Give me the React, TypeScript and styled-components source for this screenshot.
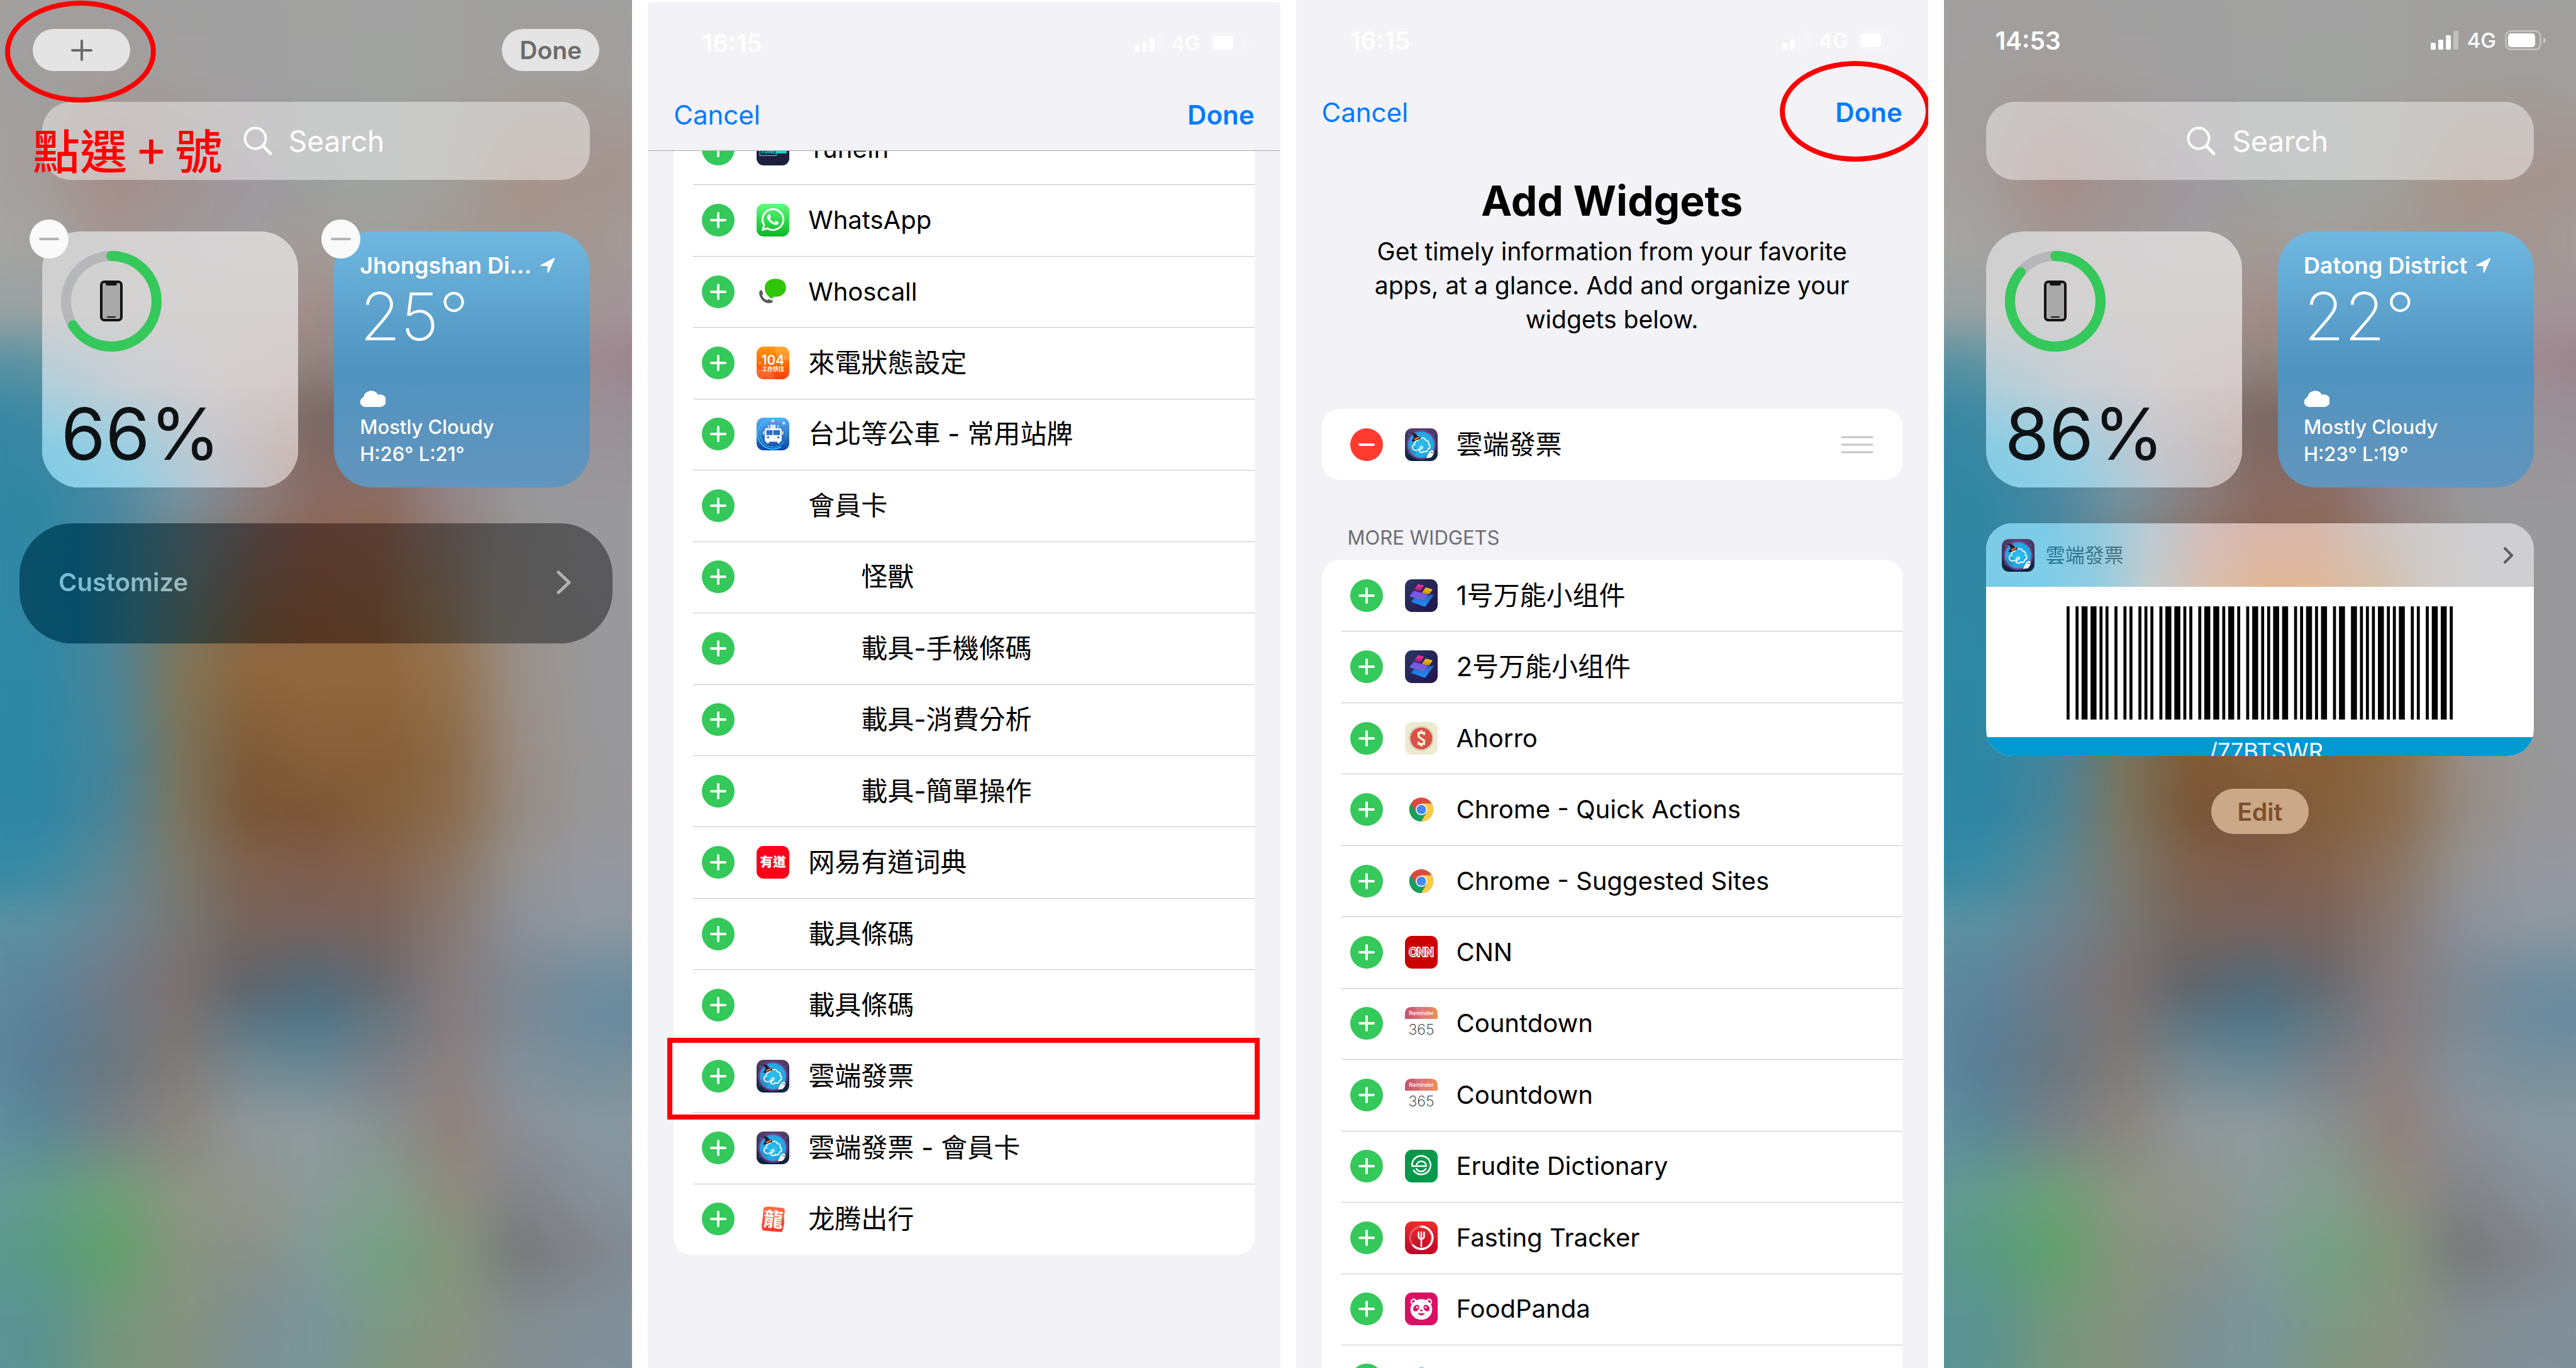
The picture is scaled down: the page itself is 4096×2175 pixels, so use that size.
import React from 'react';
import styled, { createGlobalStyle } from 'styled-components';
import { FaWhatsapp } from 'react-icons/fa';

const fontStack = `Inter, "Noto Sans CJK TC", "Noto Sans CJK SC", sans-serif`;

const GlobalStyle = createGlobalStyle`
  *, *::before, *::after { box-sizing: border-box; }
  body { margin: 0; background: #fff; font-family: ${fontStack}; color: #000; }
  button, input { font: inherit; color: inherit; border: 0; padding: 0; margin: 0; background: none; outline: none; }
  button { cursor: pointer; }
  h1, h2, p, ul { margin: 0; padding: 0; font-weight: inherit; }
  ul { list-style: none; }
  svg { display: block; flex: none; }
`;

const Board = styled.main`
  display: grid;
  grid-template-columns: repeat(4, minmax(0, 1fr));
  gap: 25px;
  min-height: 100vh;
`;

/* ---------- colour meshes ---------- */

type MeshRow = [number, string];

const MeshLayer = styled.div`
  position: absolute;
  inset: 0;
`;

const MeshBox = styled.div<{ $bleed: number; $blur: number }>`
  position: absolute;
  inset: ${(p) => -p.$bleed}px;
  filter: ${(p) => (p.$blur ? `blur(${p.$blur}px)` : 'none')};
  pointer-events: none;
`;

function Mesh({ rows, bleed = 0, blur = 0 }: { rows: MeshRow[]; bleed?: number; blur?: number }) {
  return (
    <MeshBox $bleed={bleed} $blur={blur} aria-hidden="true">
      {rows.map(([y, colours], i) => {
        const stops = colours.split(' ').map((c) => `#${c}`).join(', ');
        const prev = i ? rows[i - 1][0] : 0;
        const mask = i ? `linear-gradient(to bottom, transparent ${prev}%, #000 ${y}%)` : undefined;
        return (
          <MeshLayer
            key={y}
            style={{ background: `linear-gradient(to right, ${stops})`, maskImage: mask, WebkitMaskImage: mask }}
          />
        );
      })}
    </MeshBox>
  );
}

const wallpaper: MeshRow[] = [
  [0, 'a1a1a1 a1a09f a09f9f a0a0a0 a1a1a0 a1a1a0 a1a1a0 a1a1a0 a0a09f a0a0a0 a1a1a0'],
  [7, 'a1a09f a19f9e a39d9b a19f9e a1a0a1 a1a1a1 a0a2a0 a1a1a0 a19f9c a19e9c a1a09f'],
  [14, 'a5a4a3 a39c9a a58c88 a09494 9f999f 9ba09f 9fa4a1 a19f9b a7948a a69590 a39590'],
  [19, 'a5a6a2 a5a3a1 a39694 a09898 9f9c9e a39c98 a29e9b a29a96 a49690 a49893 a39e9c'],
  [24, '97a1a3 98a1a2 9a9c9b 9c9a99 9f9490 a08c88 a08c8a a29190 a39494 a29598 a2939b'],
  [27, '5a93a2 6295a2 8097a0 939a9d 958e8b 948580 958380 998a8a 9c9094 9d8a90 9d8188'],
  [31, '3687a3 3e88a3 5a8da0 7f949d 857a78 7a6863 7e6862 8e7c79 98908f 999298 998e98'],
  [37, '3186a3 3187a2 4a88a2 76929f 8b7f80 8b6b64 8c6c63 94868a 97989a 99989c 99989b'],
  [43, '2f88a4 2f87a4 4c8599 6e776e 87664f 8a6040 8c633f 907660 979089 999999 99979b'],
  [49, '2f8aa4 2f88a5 4b8497 807558 8f683f 93693f 92693f 95734f 9a918b 98989a 97959b'],
  [55, '2d87a3 2e88a5 45849a 79745c 7f5a38 87603a 875e37 8b6b49 9a8d86 989898 98969a'],
  [59, '3087a4 2f86a5 4a8396 7c7560 7a5637 7d5537 83603c 8b6c4e 958c85 979798 98959a'],
  [63, '3388a5 3a8aa3 5d8895 7b786c 7e614f 7e5c4d 84634f 8a7565 949391 9697a0 9598a0'],
  [67, '5b909f 5c90a0 6d8593 787774 76645d 75625d 79655f 877a75 8c909a 8f98a0 8c979f'],
  [71, '5f8b9d 5f859c 717a87 7d706f 5f6469 556976 696a6e 877c7e 7d8992 708d9e 6d8d9f'],
  [74, '6088a0 5a7f97 6b7983 7c7472 5d7683 50778a 697880 877c7e 7c8993 6c8b9f 688a9f'],
  [77, '6089a0 5a7d93 6a777f 837b77 738891 6a8894 7a7f86 8b8080 82919b 78909b 7a909b'],
  [81, '6290a2 5b8796 788087 8a857f 8f9799 8e9a9e 88908f 90817c 8c9097 8797a0 8897a0'],
  [86, '63979a 639b8a 6ea078 8c9683 92948e 8b9b98 829d8e 8f8c7e 828388 878f97 8594a0'],
  [90, '5e9893 599a82 61a06c 87957f 8b908a 809a94 74a083 84967c 77797b 818489 828f9a'],
  [95, '5c9399 5a938f 74987c 85937f 7f9091 7b959b 7d9a86 89947f 848d90 828f98 80909c'],
  [100, '5c909c 5b938d 7a957c 84917f 7c9296 7a969a 82967f 8c9283 848d92 81909b 7f909b'],
];

const frostedTile: MeshRow[] = [
  [0, 'cfcfcf d4d2d2 d8d3d4 d8d5d5'],
  [33, 'd0d0d0 d3d1d1 d5d1d1 d6d0d0'],
  [60, 'afcfda c8ced3 d2cdce d4c9c8'],
  [85, '86cce3 9acee2 c5c7cd cbbab6'],
  [100, '7fcce6 92cee3 bdc7d0 c7b5af'],
];

const frostedHeader: MeshRow[] = [
  [0, '7ccce8 7ccce8 93cbe0 bccbd4 d2bdbc d8b6ac d8b7ac cfc3c0 cdcccc cfced0 cfcfd1'],
  [100, '7ccbe6 7dcde9 90cce1 c3cbcc d9bfae dfb799 dfb799 d6bea7 d0c9c4 cfcfd1 cfcfd1'],
];

const darkPanel: MeshRow[] = [
  [0, '0a5069 084d67 224f5e 3c4a50 4f4040 5a3b33 5a3e34 574a47 575555 59595a 5b5b5d'],
  [100, '0a5069 084d67 224f5a 3c463f 4f3a27 573823 573a25 5a4833 5b5650 59595a 59595b'],
];

/* ---------- screens ---------- */

const Screen = styled.section<{ $light?: boolean; $dropped?: boolean }>`
  position: relative;
  display: flex;
  flex-direction: column;
  overflow: hidden;
  min-width: 0;
  margin-top: ${(p) => (p.$dropped ? 4 : 0)}px;
  background: ${(p) => (p.$light ? '#f2f2f7' : '#a1a1a1')};
`;

const TodayColumn = styled.div`
  position: relative;
  display: flex;
  flex-direction: column;
  padding: 0 67px;
`;

const StatusRow = styled.div`
  display: flex;
  align-items: center;
  height: 128px;
  padding: 0 48px 0 74px;
  color: #fff;
`;

const Clock = styled.time`
  width: 120px;
  margin-right: auto;
  text-align: center;
  font-size: 39px;
  font-weight: 600;
`;

const StatusIcons = styled.div`
  display: flex;
  align-items: center;
  gap: 14px;
  font-size: 33px;
  font-weight: 500;
`;

function StatusBar({ time, bars, charge, faint }: { time: string; bars: number; charge: number; faint: number }) {
  return (
    <StatusRow>
      <Clock>{time}</Clock>
      <StatusIcons>
        <svg width="44" height="30" viewBox="0 0 44 30" fill="#fff" aria-hidden="true">
          {[11, 16, 23, 30].map((h, i) => (
            <rect key={h} x={i * 12} y={30 - h} width="8" height={h} rx="2" opacity={i < bars ? 1 : faint} />
          ))}
        </svg>
        <span>4G</span>
        <svg width="65" height="32" viewBox="0 0 65 32" fill="none" aria-hidden="true">
          <rect x="1.5" y="1.5" width="55" height="29" rx="8" stroke="#fff" strokeWidth="3" opacity={faint} />
          <rect x="5" y="5" width={charge} height="22" rx="5" fill="#fff" />
          <path d="M61 11c3 1 4 3 4 5s-1 4-4 5z" fill="#fff" opacity={faint} />
        </svg>
      </StatusIcons>
    </StatusRow>
  );
}

/* ---------- today view ---------- */

const TopActions = styled.div`
  position: relative;
  display: flex;
  justify-content: space-between;
  padding: 46px 52px 49px;
`;

const Pill = styled.button<{ $warm?: boolean }>`
  display: flex;
  align-items: center;
  justify-content: center;
  width: 155px;
  height: ${(p) => (p.$warm ? 72 : 67)}px;
  border-radius: 36px;
  background: ${(p) => (p.$warm ? '#cba888' : '#e4e4e4')};
  color: ${(p) => (p.$warm ? '#7f4f2a' : '#6b6b6b')};
  font-size: 39px;
  font-weight: 600;
`;

const PhoneStatus = styled.div`
  position: relative;
  padding-bottom: 34px;
`;

const SearchBox = styled.label`
  display: flex;
  align-items: center;
  justify-content: center;
  gap: 26px;
  height: 124px;
  border-radius: 46px;
  background: rgba(255, 255, 255, 0.43);
  color: #fff;
`;

const SearchInput = styled.input`
  width: 160px;
  font-size: 46px;
  line-height: 60px;
  &::placeholder { color: #fff; opacity: 1; }
`;

function Search() {
  return (
    <SearchBox>
      <svg width="46" height="46" viewBox="0 0 46 46" fill="none" stroke="#fff" strokeWidth="4" strokeLinecap="round" aria-hidden="true">
        <circle cx="19" cy="19" r="16.5" />
        <path d="M31 31l12 12" strokeWidth="5" />
      </svg>
      <SearchInput type="text" placeholder="Search" aria-label="Search" />
    </SearchBox>
  );
}

const WidgetGrid = styled.div`
  display: grid;
  grid-template-columns: 1fr 1fr;
  gap: 57px;
  margin-top: 82px;
`;

const Widget = styled.article`
  position: relative;
  aspect-ratio: 1;
`;

const TileClip = styled.div`
  position: absolute;
  inset: 0;
  overflow: hidden;
  border-radius: 60px;
`;

const BatteryBody = styled.div`
  position: relative;
  display: flex;
  flex-direction: column;
  justify-content: space-between;
  height: 100%;
  padding: 31px 31px 17px 30px;
`;

const Percent = styled.p`
  color: #0e1214;
  font-size: 114px;
  line-height: 136px;
`;

const RemoveBadge = styled.button`
  position: absolute;
  left: -20px;
  top: -19px;
  display: grid;
  place-items: center;
  width: 62px;
  height: 62px;
  border-radius: 50%;
  background: #fafafa;
`;

function Remove({ label }: { label: string }) {
  return (
    <RemoveBadge aria-label={label}>
      <svg width="32" height="4" viewBox="0 0 32 4" aria-hidden="true">
        <rect width="32" height="4" rx="2" fill="#b4b4b4" />
      </svg>
    </RemoveBadge>
  );
}

function BatteryWidget({ level, removable }: { level: number; removable?: boolean }) {
  const r = 72;
  const length = 2 * Math.PI * r;
  return (
    <Widget>
      <TileClip>
        <Mesh rows={frostedTile} />
      </TileClip>
      <BatteryBody>
        <svg width="160" height="160" viewBox="0 0 160 160" fill="none" aria-hidden="true">
          <circle cx="80" cy="80" r={r} stroke="#8e9299" strokeOpacity="0.4" strokeWidth="16" />
          <circle
            cx="80" cy="80" r={r} stroke="#35c85a" strokeWidth="16" strokeLinecap="round"
            strokeDasharray={`${(length * level) / 100} ${length}`} transform="rotate(-90 80 80)"
          />
          <rect x="64" y="49" width="32" height="61" rx="5" fill="#a9a9a9" stroke="#131313" strokeWidth="4" />
          <path d="M71 49h18v3q0 3-3 3H74q-3 0-3-3z" fill="#131313" />
          <path d="M74 105h12" stroke="#131313" strokeWidth="2" strokeLinecap="round" />
        </svg>
        <Percent>{level}%</Percent>
      </BatteryBody>
      {removable && <Remove label="Remove Batteries" />}
    </Widget>
  );
}

const WeatherBody = styled.div`
  display: flex;
  flex-direction: column;
  height: 100%;
  padding: 32px 29px 32px 41px;
  border-radius: 60px;
  background: linear-gradient(#6fb8e0, #4f93c0 54%, #6395bd);
  color: #fff;
`;

const Place = styled.h2`
  display: flex;
  align-items: center;
  gap: 14px;
  font-size: 36px;
  font-weight: 600;
  line-height: 44px;
  white-space: nowrap;
`;

const Temperature = styled.p`
  font-size: 105px;
  font-weight: 200;
  line-height: 118px;
`;

const Conditions = styled.div`
  margin-top: auto;
  font-size: 31px;
  font-weight: 500;
  line-height: 43px;
  white-space: nowrap;
`;

const CloudIcon = styled.svg`
  margin-bottom: 10px;
`;

function WeatherWidget({ place, temp, range, removable }: { place: string; temp: string; range: string; removable?: boolean }) {
  return (
    <Widget>
      <WeatherBody>
        <Place>
          {place}
          <svg width="24" height="24" viewBox="0 0 24 24" fill="#fff" aria-hidden="true">
            <path d="M23 1.5 13.5 23q-1.4 1.6-2-.5V13H1.500q-2-.8-.4-2L21.500.5q2-.6 1.500 1z" />
          </svg>
        </Place>
        <Temperature>{temp}</Temperature>
        <Conditions>
          <CloudIcon width="41" height="26" viewBox="0 0 41 26" fill="#fff" aria-hidden="true">
            <path d="M8 26a8 8 0 0 1-2-15.500A12.500 12.500 0 0 1 29 6.500 10 10 0 1 1 32 26z" />
          </CloudIcon>
          <p>Mostly Cloudy</p>
          <p>{range}</p>
        </Conditions>
      </WeatherBody>
      {removable && <Remove label="Remove Weather" />}
    </Widget>
  );
}

const CustomizePanel = styled.button`
  position: relative;
  display: flex;
  align-items: center;
  justify-content: space-between;
  overflow: hidden;
  height: 191px;
  margin: 57px -36px 0;
  padding: 0 66px 4px 62px;
  border-radius: 84px;
  font-size: 40px;
  font-weight: 600;
`;

const CustomizeLabel = styled.span`
  position: relative;
  background: linear-gradient(to right, #74bfd9, #9fb9bd);
  background-clip: text;
  color: transparent;
`;

const Chevron = styled.svg`
  position: relative;
`;

const InvoiceCard = styled.article`
  overflow: hidden;
  margin-top: 57px;
  border-radius: 42px;
  background: #fff;
`;

const InvoiceHeader = styled.header`
  position: relative;
  display: flex;
  align-items: center;
  gap: 18px;
  height: 101px;
  padding: 0 32px 0 25px;
`;

const InvoiceTitle = styled.h2`
  position: relative;
  margin-right: auto;
  background: linear-gradient(to right, #1d7192, #4d6f7e);
  background-clip: text;
  color: transparent;
  font-size: 31px;
  line-height: 40px;
`;

const BarcodeArea = styled.div`
  display: flex;
  justify-content: center;
  padding: 31px 0 28px;
`;

const CarrierCode = styled.p`
  overflow: hidden;
  height: 30px;
  padding-left: 20px;
  background: #0099d0;
  color: #fff;
  font-size: 36px;
  line-height: 44px;
  text-align: center;
`;

const EditRow = styled.div`
  display: flex;
  justify-content: center;
  margin-top: 52px;
`;

const code39: Record<string, string> = {
  '*': 'nwnnwnwnn',
  '/': 'nwnwnnnwn',
  '7': 'nnnwnnwnw',
  B: 'nnwnnwnnw',
  T: 'nnnnwnwwn',
  S: 'nnwnnnwwn',
  W: 'wwwnnnnnn',
  R: 'wnnnnnwwn',
};

function Barcode({ value }: { value: string }) {
  const bars: { x: number; w: number }[] = [];
  let x = 0;
  for (const ch of `*${value}*`) {
    [...code39[ch]].forEach((kind, i) => {
      const w = kind === 'w' ? 2 : 1;
      if (i % 2 === 0) bars.push({ x, w });
      x += w;
    });
    x += 1;
  }
  return (
    <svg width="614" height="180" viewBox={`0 0 ${x - 1} 10`} preserveAspectRatio="none" role="img" aria-label={value}>
      {bars.map((b) => (
        <rect key={b.x} x={b.x} y="0" width={b.w} height="10" />
      ))}
    </svg>
  );
}

/* ---------- app icons ---------- */

const Tile = ({ children, fill }: { children?: React.ReactNode; fill: string }) => (
  <svg width="52" height="52" viewBox="0 0 60 60" aria-hidden="true">
    <rect width="60" height="60" rx="13" fill={fill} />
    {children}
  </svg>
);

const SharedDefs = () => (
  <svg width="0" height="0" style={{ position: 'absolute' }} aria-hidden="true">
    <defs>
      <linearGradient id="waBg" x2="0" y2="1"><stop stopColor="#62fb7c" /><stop offset="1" stopColor="#06b824" /></linearGradient>
      <linearGradient id="jobBg" x2="0" y2="1"><stop stopColor="#ff9800" /><stop offset="1" stopColor="#ff3d0a" /></linearGradient>
      <linearGradient id="busBg" x2="0" y2="1"><stop stopColor="#5aabf8" /><stop offset="1" stopColor="#0c46a3" /></linearGradient>
      <linearGradient id="nightBg" x2="0" y2="1"><stop stopColor="#553e6c" /><stop offset="1" stopColor="#08213a" /></linearGradient>
      <radialGradient id="moon"><stop stopColor="#2cc0f0" /><stop offset=".8" stopColor="#22a4df" /><stop offset=".86" stopColor="#7d3f93" /><stop offset="1" stopColor="#7d3f93" stopOpacity="0" /></radialGradient>
      <linearGradient id="widgetBg" x2="1" y2="1"><stop stopColor="#2a3763" /><stop offset="1" stopColor="#23134d" /></linearGradient>
      <linearGradient id="pinkSlab" x2="0" y2="1"><stop stopColor="#ff2f9f" /><stop offset="1" stopColor="#8d2070" /></linearGradient>
      <linearGradient id="goldSlab" x2="0" y2="1"><stop stopColor="#ffc400" /><stop offset="1" stopColor="#b98525" /></linearGradient>
      <linearGradient id="violetSlab" x2="0" y2="1"><stop stopColor="#7a4dff" /><stop offset="1" stopColor="#7167bd" /></linearGradient>
      <linearGradient id="blueSlab" x2="0" y2="1"><stop stopColor="#2463bd" /><stop offset="1" stopColor="#2090ff" /></linearGradient>
      <linearGradient id="remBg" x2="1" y2="0"><stop stopColor="#bf5272" /><stop offset=".6" stopColor="#e3736c" /><stop offset="1" stopColor="#e79356" /></linearGradient>
      <linearGradient id="fastBg" x2="0" y2="1"><stop stopColor="#ee2d2c" /><stop offset="1" stopColor="#bd0427" /></linearGradient>
      <linearGradient id="sealBg" x2="0" y2="1"><stop stopColor="#ff6d43" /><stop offset="1" stopColor="#f8372c" /></linearGradient>
    </defs>
  </svg>
);

const icons: Record<string, React.ReactNode> = {
  blank: <svg width="52" height="52" aria-hidden="true" />,
  tunein: (
    <Tile fill="#1c203c">
      <rect x="32" y="20" width="23" height="18" fill="#14d8cc" />
      <rect x="6" y="23" width="30" height="19" fill="#1c203c" stroke="#14d8cc" strokeWidth="1.500" />
      <text x="21" y="38" textAnchor="middle" fontSize="10" fontWeight="800" fill="#14d8cc">TUNE</text>
    </Tile>
  ),
  whatsapp: (
    <Tile fill="url(#waBg)">
      <g transform="translate(6 5)">
        <FaWhatsapp size={48} color="#fff" />
      </g>
    </Tile>
  ),
  whoscall: (
    <svg width="52" height="52" viewBox="0 0 60 60" aria-hidden="true">
      <path d="M34 6h1c13 0 19 7 19 16 0 10-7 17-18 17-4 0-6 0-7 3l-1 1q-4-2-6-5c-4-4-7-9-7-15C15 12 23 6 34 6z" fill="#31c50a" />
      <path d="M5 30q2-5 5-2l2 5q0 2-2 3 3 8 10 9 1-2 4-1l5 2q2 2-1 4-10 3-18-5Q4 37 5 30z" fill="#5b5b5b" />
    </svg>
  ),
  job: (
    <Tile fill="url(#jobBg)">
      <path d="M33 0h14q13 0 13 13v13q-27 2-27-26z" fill="#fff" opacity=".18" />
      <path d="M0 42q33-8 33 18H13Q0 60 0 47z" fill="#fff" opacity=".14" />
      <text x="30" y="34" textAnchor="middle" fontSize="24" fontWeight="600" fill="#fff">104</text>
      <text x="30" y="45" textAnchor="middle" fontSize="10" fontWeight="700" fill="#fff">工作快找</text>
      <path d="M6 27v6M3 30h6M52 17v6M49 20h6" stroke="#ffc08a" strokeWidth="1" />
    </Tile>
  ),
  bus: (
    <Tile fill="url(#busBg)">
      <g fill="none" stroke="#35c4ff" strokeLinecap="round">
        <path d="M50 10A28 28 0 1 0 44 54" strokeWidth="2" />
        <path d="M30 6A24 24 0 1 0 50 44" strokeWidth="1.500" opacity=".8" />
        <path d="M46 12A24 24 0 0 1 54 36" strokeWidth="1" opacity=".5" />
      </g>
      <circle cx="50" cy="10" r="2.500" fill="#c9f6ff" /><circle cx="30" cy="6" r="2.500" fill="#c9f6ff" />
      <rect x="25" y="13" width="10" height="8" rx="1" fill="#dcecff" />
      <rect x="15" y="20" width="31" height="24" rx="3" fill="#fff" />
      <rect x="18" y="23" width="25" height="9" fill="#2c6fc6" />
      <path d="M30 23v9" stroke="#fff" strokeWidth="1.500" />
      <path d="M13 25v6M48 25v6" stroke="#fff" strokeWidth="2" />
      <circle cx="21" cy="36" r="2" fill="#2c6fc6" /><circle cx="40" cy="36" r="2" fill="#2c6fc6" />
      <rect x="18" y="42" width="5" height="5" rx="1" fill="#fff" /><rect x="38" y="42" width="5" height="5" rx="1" fill="#fff" />
      <path d="M18 19l3 2M21 14l2 5M43 19l-3 2M40 14l-2 5" stroke="#fff" strokeWidth="1.500" />
    </Tile>
  ),
  youdao: (
    <Tile fill="#ff001b">
      <text x="30" y="38" textAnchor="middle" fontSize="24" fontWeight="900" fill="#fff">有道</text>
    </Tile>
  ),
  invoice: (
    <Tile fill="url(#nightBg)">
      <circle cx="30" cy="30" r="29" fill="url(#moon)" />
      <path d="M8 38q5-6 12-2v14q-9-4-12-12z" fill="#2489b8" opacity=".6" />
      <g fill="none" stroke="#fff" strokeWidth="2" strokeLinecap="round">
        <path d="M22 40c-5 1-9-2-8-6 0-3 2-4 4-4-1-5 2-8 6-8 2-5 12-6 14 0 4 0 7 4 5 7 4 2 4 8-1 9 0 4-4 6-8 4" />
        <path d="M24 39c4 1 9-2 8-5-2-2-6 1-6 6 0 5 5 5 8 3" />
      </g>
      <path d="M11 9c6-1 10 1 12 5l5 2q2 1 0 3l-12 5q-3 1-4-1l4-5q0-6-5-9z" fill="#2b1533" />
      <path d="M17 19l9-4 1 2-9 5z" fill="#f08a1d" />
      <path d="M44 44q3-5 8-3 2 4-1 9-3 5-8 4l-4 1 2-5q2-3 3-6z" fill="#fff" />
      <circle cx="48" cy="44" r="1" fill="#223" /><circle cx="51" cy="45" r="1" fill="#223" />
      <circle cx="7" cy="12" r="1" fill="#2aa8c8" /><circle cx="53" cy="11" r="1" fill="#2aa8c8" /><circle cx="6" cy="46" r="1" fill="#2aa8c8" />
    </Tile>
  ),
  seal: (
    <svg width="52" height="52" viewBox="0 0 60 60" aria-hidden="true">
      <path d="M13 9q9-3 18-1l19 2 2 6-2 8 1 14-3 12-1 4-17-1-19-2-2-8 2-13z" fill="url(#sealBg)" />
      <text x="31" y="44" textAnchor="middle" fontSize="36" fontWeight="700" fill="#fff" transform="rotate(5 30 30)">龍</text>
    </svg>
  ),
  slabs: (
    <Tile fill="url(#widgetBg)">
      <path d="M17 34l34-6q2 0 1 2L38 49q-1 1-3 1L13 42q-2-1-1-2z" fill="url(#blueSlab)" />
      <path d="M16 21l24 6q2 0 1 2l-5 8q-1 1-3 1L10 32q-2-1-1-2z" fill="url(#violetSlab)" />
      <path d="M24 9l10 2q1 1 0 2l-5 8q-1 1-2 1l-9-3q-1-1 0-2z" fill="url(#pinkSlab)" />
      <path d="M38 15l11 3q2 1 1 2l-5 7-2 1-11-3q-1-1 0-2z" fill="url(#goldSlab)" />
    </Tile>
  ),
  ahorro: (
    <Tile fill="#eeead2">
      <circle cx="30" cy="30" r="23" fill="#d4cfb6" />
      <circle cx="30" cy="30" r="20" fill="#db4f45" />
      <path d="M35 24v-4H25v7l10 7v6H25v-4M30 15v5M30 40v5" fill="none" stroke="#f4efd8" strokeWidth="4" />
    </Tile>
  ),
  chrome: (
    <svg width="52" height="52" viewBox="0 0 60 60" aria-hidden="true">
      <circle cx="30" cy="30" r="22" fill="#db4a3e" />
      <path d="M10.900 19L20.500 35.500 30 41l9.500-5.500L30 52A22 22 0 0 1 10.900 19z" fill="#14a05d" />
      <path d="M49.100 19H30l9.500 16.500L30 52A22 22 0 0 0 49.100 19z" fill="#fdcc44" />
      <circle cx="30" cy="30" r="10.500" fill="#f3f3f3" />
      <circle cx="30" cy="30" r="8.500" fill="#4688f4" />
    </svg>
  ),
  cnn: (
    <Tile fill="#cc0000">
      <text x="30" y="37" textAnchor="middle" fontSize="20" fontWeight="300" fill="#fff" stroke="#fff" strokeWidth="4">CNN</text>
      <text x="30" y="37" textAnchor="middle" fontSize="20" fontWeight="300" fill="#cc0000">CNN</text>
    </Tile>
  ),
  countdown: (
    <svg width="52" height="52" viewBox="0 0 60 60" aria-hidden="true">
      <path d="M0 22V13Q0 0 13 0h34q13 0 13 13v9z" fill="url(#remBg)" />
      <path d="M16 0l12 22H40L34 0z" fill="#fff" opacity=".08" />
      <text x="30" y="15" textAnchor="middle" fontSize="10" fontWeight="500" fill="#fff">Reminder</text>
      <text x="30" y="51" textAnchor="middle" fontSize="27" fontWeight="200" fill="#222">365</text>
    </svg>
  ),
  erudite: (
    <Tile fill="#04984a">
      <g fill="none" stroke="#fff" strokeWidth="3" strokeLinecap="round" strokeLinejoin="round">
        <path d="M16 38A17 17 0 1 0 13 30h26a9 9 0 1 0-18 0" />
        <path d="M21 35a10 10 0 0 0 17 0" />
      </g>
    </Tile>
  ),
  fasting: (
    <Tile fill="url(#fastBg)">
      <g fill="none" strokeWidth="4" strokeLinecap="round">
        <circle cx="30" cy="30" r="20.500" stroke="#fff" opacity=".25" />
        <path d="M30 9.500A20.500 20.500 0 1 1 15 44" stroke="#fff" />
      </g>
      <path d="M25 20v8q0 4 5 4t5-4v-8M30 20v26" fill="none" stroke="#fff" strokeWidth="3" strokeLinecap="round" />
    </Tile>
  ),
  panda: (
    <Tile fill="#d91063">
      <g fill="#d91063" stroke="#fff" strokeWidth="2.500"><circle cx="16" cy="17" r="4.500" /><circle cx="44" cy="17" r="4.500" /></g>
      <ellipse cx="30" cy="31" rx="20" ry="19" fill="#fff" />
      <ellipse cx="20.500" cy="28.500" rx="5" ry="6.500" transform="rotate(35 20.500 28.500)" fill="#d91063" />
      <ellipse cx="39.500" cy="28.500" rx="5" ry="6.500" transform="rotate(-35 39.500 28.500)" fill="#d91063" />
      <circle cx="22" cy="27" r="1.800" fill="#fff" /><circle cx="38" cy="27" r="1.800" fill="#fff" />
      <ellipse cx="30" cy="33" rx="2.500" ry="1.500" fill="#d91063" />
      <path d="M24 37q6 3 12 0-1 5-6 5t-6-5z" fill="#d91063" />
    </Tile>
  ),
  dot: (
    <svg width="52" height="52" viewBox="0 0 60 60" aria-hidden="true">
      <circle cx="30" cy="14" r="8" fill="#9cc7f5" />
    </svg>
  ),
};

/* ---------- edit sheet ---------- */

const SheetHeader = styled.header<{ $ruled?: boolean }>`
  position: relative;
  z-index: 1;
  padding-bottom: ${(p) => (p.$ruled ? 7 : 0)}px;
  background: #f2f2f7;
  box-shadow: ${(p) => (p.$ruled ? '0 1px 0 #a9a9ad' : 'none')};
`;

const SheetNav = styled.nav`
  display: flex;
  align-items: center;
  justify-content: space-between;
  height: 100px;
  padding: 0 41px;
`;

const NavButton = styled.button<{ $strong?: boolean }>`
  color: #007aff;
  font-size: 42px;
  font-weight: ${(p) => (p.$strong ? 600 : 400)};
`;

const SheetTitle = styled.h1`
  margin-top: 51px;
  font-size: 66px;
  font-weight: 700;
  line-height: 80px;
  text-align: center;
`;

const SheetIntro = styled.p`
  width: 800px;
  max-width: 90%;
  margin: 14px auto 0;
  font-size: 39px;
  line-height: 54px;
  text-align: center;
`;

const SectionLabel = styled.h2`
  margin: 72px 82px 15px;
  color: #6d6d72;
  font-size: 31px;
  line-height: 40px;
`;

const Card = styled.ul<{ $place: 'single' | 'tail' | 'run' }>`
  display: flex;
  flex-direction: column;
  flex: ${(p) => (p.$place === 'single' ? '0 0 auto' : '1 0 auto')};
  margin: ${(p) => ({ single: '115px 41px 0', tail: '-59px 41px 180px', run: '0 41px -76px' })[p.$place]};
  border-radius: 28px;
  background: #fff;
`;

const Row = styled.li`
  position: relative;
  display: flex;
  flex: 1 0 auto;
  align-items: center;
  min-height: 113px;
  margin-left: 31px;
  padding: 0 46px 0 14px;
  & + &::before {
    content: '';
    position: absolute;
    inset: 0 0 auto;
    height: 1px;
    background: #c6c6c8;
  }
`;

const RoundButton = styled.button<{ $tone: string }>`
  display: grid;
  place-items: center;
  width: 52px;
  height: 52px;
  margin-right: 35px;
  border-radius: 50%;
  background: ${(p) => p.$tone};
`;

const RowLabel = styled.span<{ $indent?: boolean; $latin: boolean }>`
  margin: 0 auto 0 ${(p) => (p.$indent ? 114 : 30)}px;
  font-size: ${(p) => (p.$latin ? 40 : 42)}px;
  line-height: 56px;
  white-space: nowrap;
`;

const HighlightFrame = styled.span`
  position: absolute;
  inset: -5px -8px -12px -41px;
  z-index: 1;
  border: 8px solid #fb0000;
  pointer-events: none;
`;

const HighlightOval = styled.span<{ $spot: 'add' | 'done' }>`
  position: absolute;
  z-index: 2;
  top: ${(p) => (p.$spot === 'add' ? 1 : 97)}px;
  left: ${(p) => (p.$spot === 'add' ? '8px' : 'auto')};
  right: ${(p) => (p.$spot === 'done' ? '-4px' : 'auto')};
  width: 240px;
  height: ${(p) => (p.$spot === 'add' ? 162 : 160)}px;
  border: 8px solid #fb0000;
  border-radius: 50%;
  pointer-events: none;
`;

const Callout = styled.p`
  position: absolute;
  z-index: 2;
  left: 52px;
  top: 183px;
  color: #ff0000;
  font-family: "Noto Sans CJK TC", sans-serif;
  font-size: 75px;
  font-weight: 500;
  line-height: 108px;
  white-space: nowrap;
`;

interface Item {
  name: string;
  icon: string;
  indent?: boolean;
  marked?: boolean;
}

function WidgetRow({ item, remove }: { item: Item; remove?: boolean }) {
  return (
    <Row>
      <RoundButton $tone={remove ? '#ff3b30' : '#35c85a'} aria-label={`${remove ? 'Remove' : 'Add'} ${item.name}`}>
        <svg width="26" height="26" viewBox="0 0 26 26" stroke="#fff" strokeWidth="4" strokeLinecap="round" aria-hidden="true">
          <path d={remove ? 'M2 13h22' : 'M2 13h22M13 2v22'} />
        </svg>
      </RoundButton>
      {icons[item.icon]}
      <RowLabel $indent={item.indent} $latin={/^[\x20-\x7e]*$/.test(item.name)}>{item.name}</RowLabel>
      {remove && (
        <svg width="52" height="28" viewBox="0 0 52 28" stroke="#c4c4c6" strokeWidth="3" strokeLinecap="round" aria-hidden="true">
          <path d="M2 2h48M2 14h48M2 26h48" />
        </svg>
      )}
      {item.marked && <HighlightFrame />}
    </Row>
  );
}

const tailItems: Item[] = [
  { name: 'TuneIn', icon: 'tunein' },
  { name: 'WhatsApp', icon: 'whatsapp' },
  { name: 'Whoscall', icon: 'whoscall' },
  { name: '來電狀態設定', icon: 'job' },
  { name: '台北等公車 - 常用站牌', icon: 'bus' },
  { name: '會員卡', icon: 'blank' },
  { name: '怪獸', icon: 'blank', indent: true },
  { name: '載具-手機條碼', icon: 'blank', indent: true },
  { name: '載具-消費分析', icon: 'blank', indent: true },
  { name: '載具-簡單操作', icon: 'blank', indent: true },
  { name: '网易有道词典', icon: 'youdao' },
  { name: '載具條碼', icon: 'blank' },
  { name: '載具條碼', icon: 'blank' },
  { name: '雲端發票', icon: 'invoice', marked: true },
  { name: '雲端發票 - 會員卡', icon: 'invoice' },
  { name: '龙腾出行', icon: 'seal' },
];

const moreItems: Item[] = [
  { name: '1号万能小组件', icon: 'slabs' },
  { name: '2号万能小组件', icon: 'slabs' },
  { name: 'Ahorro', icon: 'ahorro' },
  { name: 'Chrome - Quick Actions', icon: 'chrome' },
  { name: 'Chrome - Suggested Sites', icon: 'chrome' },
  { name: 'CNN', icon: 'cnn' },
  { name: 'Countdown', icon: 'countdown' },
  { name: 'Countdown', icon: 'countdown' },
  { name: 'Erudite Dictionary', icon: 'erudite' },
  { name: 'Fasting Tracker', icon: 'fasting' },
  { name: 'FoodPanda', icon: 'panda' },
  { name: '', icon: 'dot' },
];

function Nav() {
  return (
    <SheetNav>
      <NavButton>Cancel</NavButton>
      <NavButton $strong>Done</NavButton>
    </SheetNav>
  );
}

export default function App() {
  return (
    <>
      <GlobalStyle />
      <SharedDefs />
      <Board>
        <Screen>
          <Mesh rows={wallpaper} bleed={40} blur={18} />
          <TopActions>
            <Pill aria-label="Add widget">
              <svg width="34" height="34" viewBox="0 0 34 34" stroke="#6b6b6b" strokeWidth="4" strokeLinecap="round" aria-hidden="true">
                <path d="M2 17h30M17 2v30" />
              </svg>
            </Pill>
            <Pill>Done</Pill>
          </TopActions>
          <HighlightOval $spot="add" />
          <TodayColumn>
            <Search />
            <WidgetGrid>
              <BatteryWidget level={66} removable />
              <WeatherWidget place="Jhongshan Di..." temp="25°" range="H:26° L:21°" removable />
            </WidgetGrid>
            <CustomizePanel>
              <Mesh rows={darkPanel} />
              <CustomizeLabel>Customize</CustomizeLabel>
              <Chevron width="23" height="38" viewBox="0 0 23 38" fill="none" stroke="#b3b3b3" strokeWidth="5" strokeLinecap="round" strokeLinejoin="round" aria-hidden="true">
                <path d="M3 3l17 16L3 35" />
              </Chevron>
            </CustomizePanel>
          </TodayColumn>
          <Callout>點選 + 號</Callout>
        </Screen>

        <Screen $light $dropped>
          <SheetHeader $ruled>
            <StatusBar time="16:15" bars={3} charge={33} faint={0.25} />
            <Nav />
          </SheetHeader>
          <Card $place="tail">
            {tailItems.map((item, i) => (
              <WidgetRow key={i} item={item} />
            ))}
          </Card>
        </Screen>

        <Screen $light>
          <SheetHeader>
            <StatusBar time="16:15" bars={2} charge={33} faint={0.25} />
            <Nav />
          </SheetHeader>
          <HighlightOval $spot="done" />
          <SheetTitle>Add Widgets</SheetTitle>
          <SheetIntro>
            Get timely information from your favorite apps, at a glance. Add and organize your widgets below.
          </SheetIntro>
          <Card $place="single">
            <WidgetRow item={{ name: '雲端發票', icon: 'invoice' }} remove />
          </Card>
          <SectionLabel>MORE WIDGETS</SectionLabel>
          <Card $place="run">
            {moreItems.map((item, i) => (
              <WidgetRow key={i} item={item} />
            ))}
          </Card>
        </Screen>

        <Screen>
          <Mesh rows={wallpaper} bleed={40} blur={18} />
          <PhoneStatus>
            <StatusBar time="14:53" bars={3} charge={43} faint={0.35} />
          </PhoneStatus>
          <TodayColumn>
            <Search />
            <WidgetGrid>
              <BatteryWidget level={86} />
              <WeatherWidget place="Datong District" temp="22°" range="H:23° L:19°" />
            </WidgetGrid>
            <InvoiceCard>
              <InvoiceHeader>
                <Mesh rows={frostedHeader} />
                <Chevron as="span">{icons.invoice}</Chevron>
                <InvoiceTitle>雲端發票</InvoiceTitle>
                <Chevron width="16" height="26" viewBox="0 0 16 26" fill="none" stroke="#5c5c60" strokeWidth="4" strokeLinecap="round" strokeLinejoin="round" aria-hidden="true">
                  <path d="M2 2l11 11L2 24" />
                </Chevron>
              </InvoiceHeader>
              <BarcodeArea>
                <Barcode value="/77BTSWR" />
              </BarcodeArea>
              <CarrierCode>/77BTSWR</CarrierCode>
            </InvoiceCard>
            <EditRow>
              <Pill $warm>Edit</Pill>
            </EditRow>
          </TodayColumn>
        </Screen>
      </Board>
    </>
  );
}
